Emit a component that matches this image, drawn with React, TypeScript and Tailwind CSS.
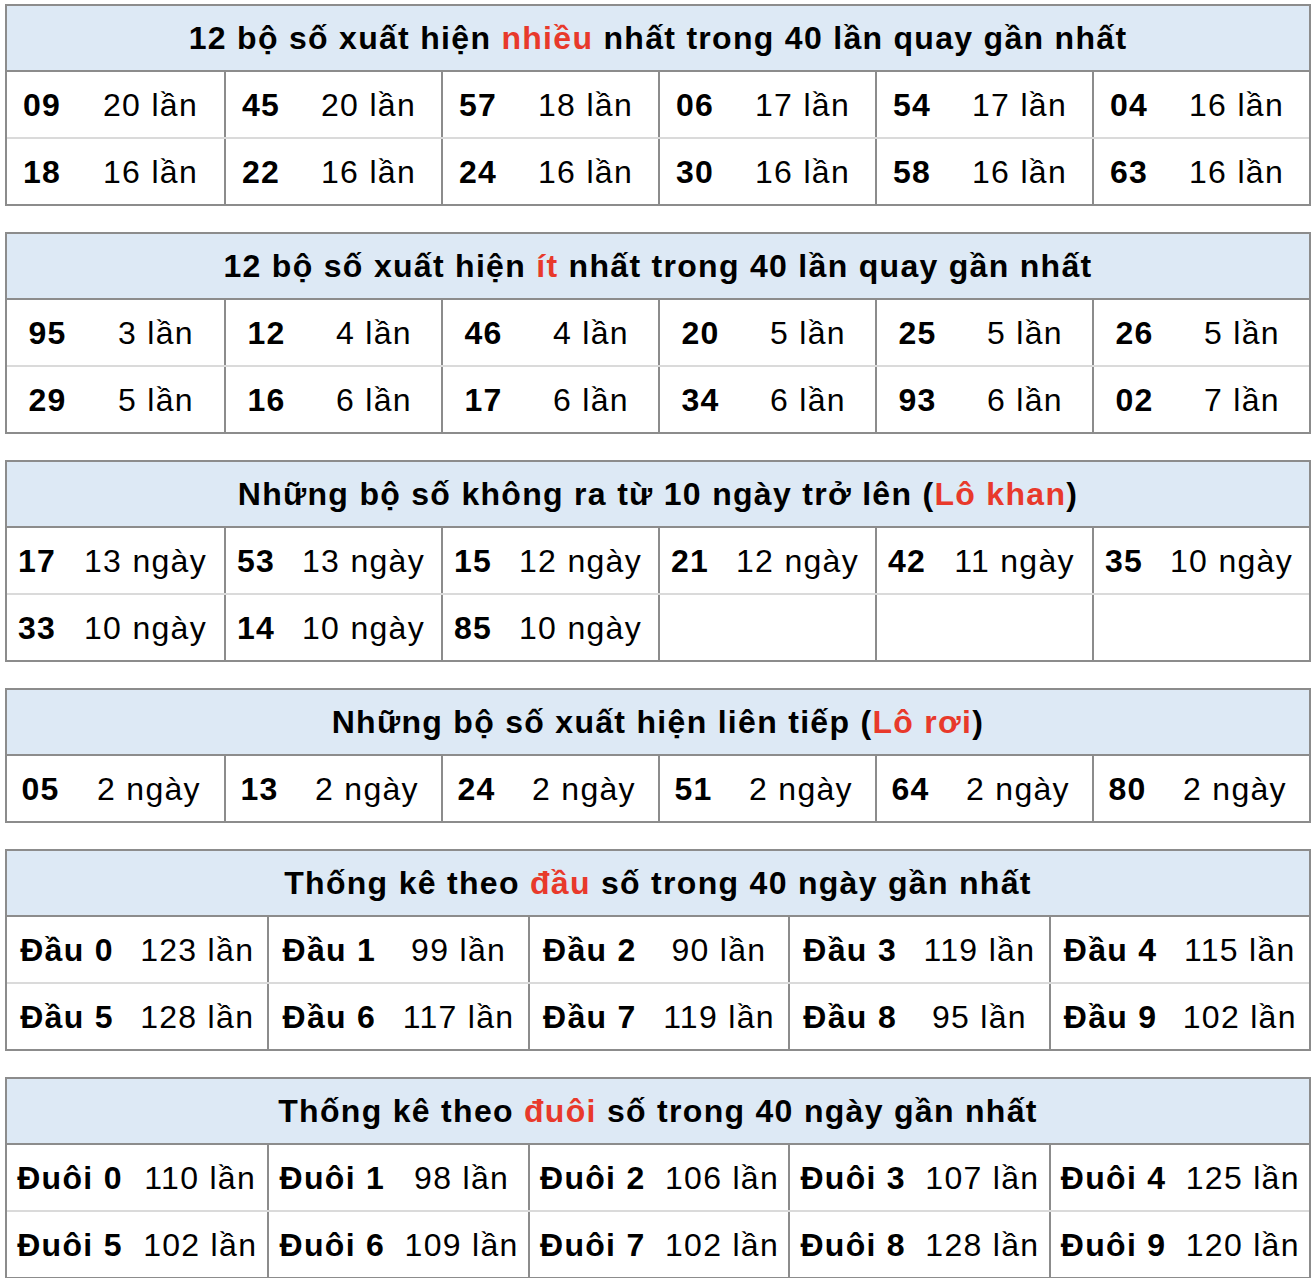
import React from "react";

type Pair = [string, string];

const RED = "text-[#e8392b]";

function Section({
  title,
  rows,
  cols,
  numW,
}: {
  title: React.ReactNode;
  rows: (Pair | null)[][];
  cols: 5 | 6;
  numW: string;
}) {
  const gridCls = cols === 6 ? "grid grid-cols-6" : "grid grid-cols-5";
  return (
    <div className="w-[1306px] ml-[5px] border-2 border-[#8c8c8c] bg-white">
      <div className="h-[64px] bg-[#dde9f5] flex items-center justify-center font-bold text-[32px] tracking-[1.3px] text-black">
        {title}
      </div>
      {rows.map((row, ri) => (
        <div
          key={ri}
          className={
            gridCls +
            " h-[67px] " +
            (ri === 0 ? "border-t-2 border-[#8c8c8c]" : "border-t-2 border-[#dadada]")
          }
        >
          {row.map((p, ci) => (
            <div
              key={ci}
              className={
                "flex items-center h-full text-[32px] tracking-[1.3px] text-black " +
                (ci > 0 ? "border-l-2 border-[#8c8c8c]" : "")
              }
            >
              {p && (
                <>
                  <div className={numW + " shrink-0 text-center font-bold whitespace-nowrap"}>{p[0]}</div>
                  <div className="flex-1 text-center whitespace-nowrap">{p[1]}</div>
                </>
              )}
            </div>
          ))}
        </div>
      ))}
    </div>
  );
}

const L = "lần";

export default function App() {
  const t1: Pair[][] = [
    [["09", "20 " + L], ["45", "20 " + L], ["57", "18 " + L], ["06", "17 " + L], ["54", "17 " + L], ["04", "16 " + L]],
    [["18", "16 " + L], ["22", "16 " + L], ["24", "16 " + L], ["30", "16 " + L], ["58", "16 " + L], ["63", "16 " + L]],
  ];
  const t2: Pair[][] = [
    [["95", "3 " + L], ["12", "4 " + L], ["46", "4 " + L], ["20", "5 " + L], ["25", "5 " + L], ["26", "5 " + L]],
    [["29", "5 " + L], ["16", "6 " + L], ["17", "6 " + L], ["34", "6 " + L], ["93", "6 " + L], ["02", "7 " + L]],
  ];
  const t3: (Pair | null)[][] = [
    [["17", "13 ngày"], ["53", "13 ngày"], ["15", "12 ngày"], ["21", "12 ngày"], ["42", "11 ngày"], ["35", "10 ngày"]],
    [["33", "10 ngày"], ["14", "10 ngày"], ["85", "10 ngày"], null, null, null],
  ];
  const t4: Pair[][] = [
    [["05", "2 ngày"], ["13", "2 ngày"], ["24", "2 ngày"], ["51", "2 ngày"], ["64", "2 ngày"], ["80", "2 ngày"]],
  ];
  const t5: Pair[][] = [
    [["Đầu 0", "123 " + L], ["Đầu 1", "99 " + L], ["Đầu 2", "90 " + L], ["Đầu 3", "119 " + L], ["Đầu 4", "115 " + L]],
    [["Đầu 5", "128 " + L], ["Đầu 6", "117 " + L], ["Đầu 7", "119 " + L], ["Đầu 8", "95 " + L], ["Đầu 9", "102 " + L]],
  ];
  const t6: Pair[][] = [
    [["Đuôi 0", "110 " + L], ["Đuôi 1", "98 " + L], ["Đuôi 2", "106 " + L], ["Đuôi 3", "107 " + L], ["Đuôi 4", "125 " + L]],
    [["Đuôi 5", "102 " + L], ["Đuôi 6", "109 " + L], ["Đuôi 7", "102 " + L], ["Đuôi 8", "128 " + L], ["Đuôi 9", "120 " + L]],
  ];

  return (
    <div
      className="w-[1314px] min-h-[1278px] bg-white pt-[4px] flex flex-col gap-[26px]"
      style={{ fontFamily: '"Liberation Sans", Arial, Helvetica, sans-serif' }}
    >
      <Section
        title={
          <span>
            12 bộ số xuất hiện <span className={RED}>nhiều</span> nhất trong 40 lần quay gần nhất
          </span>
        }
        rows={t1}
        cols={6}
        numW="w-[70px]"
      />
      <Section
        title={
          <span>
            12 bộ số xuất hiện <span className={RED}>ít</span> nhất trong 40 lần quay gần nhất
          </span>
        }
        rows={t2}
        cols={6}
        numW="w-[81px]"
      />
      <Section
        title={
          <span>
            Những bộ số không ra từ 10 ngày trở lên (<span className={RED}>Lô khan</span>)
          </span>
        }
        rows={t3}
        cols={6}
        numW="w-[60px]"
      />
      <Section
        title={
          <span>
            Những bộ số xuất hiện liên tiếp (<span className={RED}>Lô rơi</span>)
          </span>
        }
        rows={t4}
        cols={6}
        numW="w-[67px]"
      />
      <Section
        title={
          <span>
            Thống kê theo <span className={RED}>đầu</span> số trong 40 ngày gần nhất
          </span>
        }
        rows={t5}
        cols={5}
        numW="w-[120px]"
      />
      <Section
        title={
          <span>
            Thống kê theo <span className={RED}>đuôi</span> số trong 40 ngày gần nhất
          </span>
        }
        rows={t6}
        cols={5}
        numW="w-[126px]"
      />
    </div>
  );
}
